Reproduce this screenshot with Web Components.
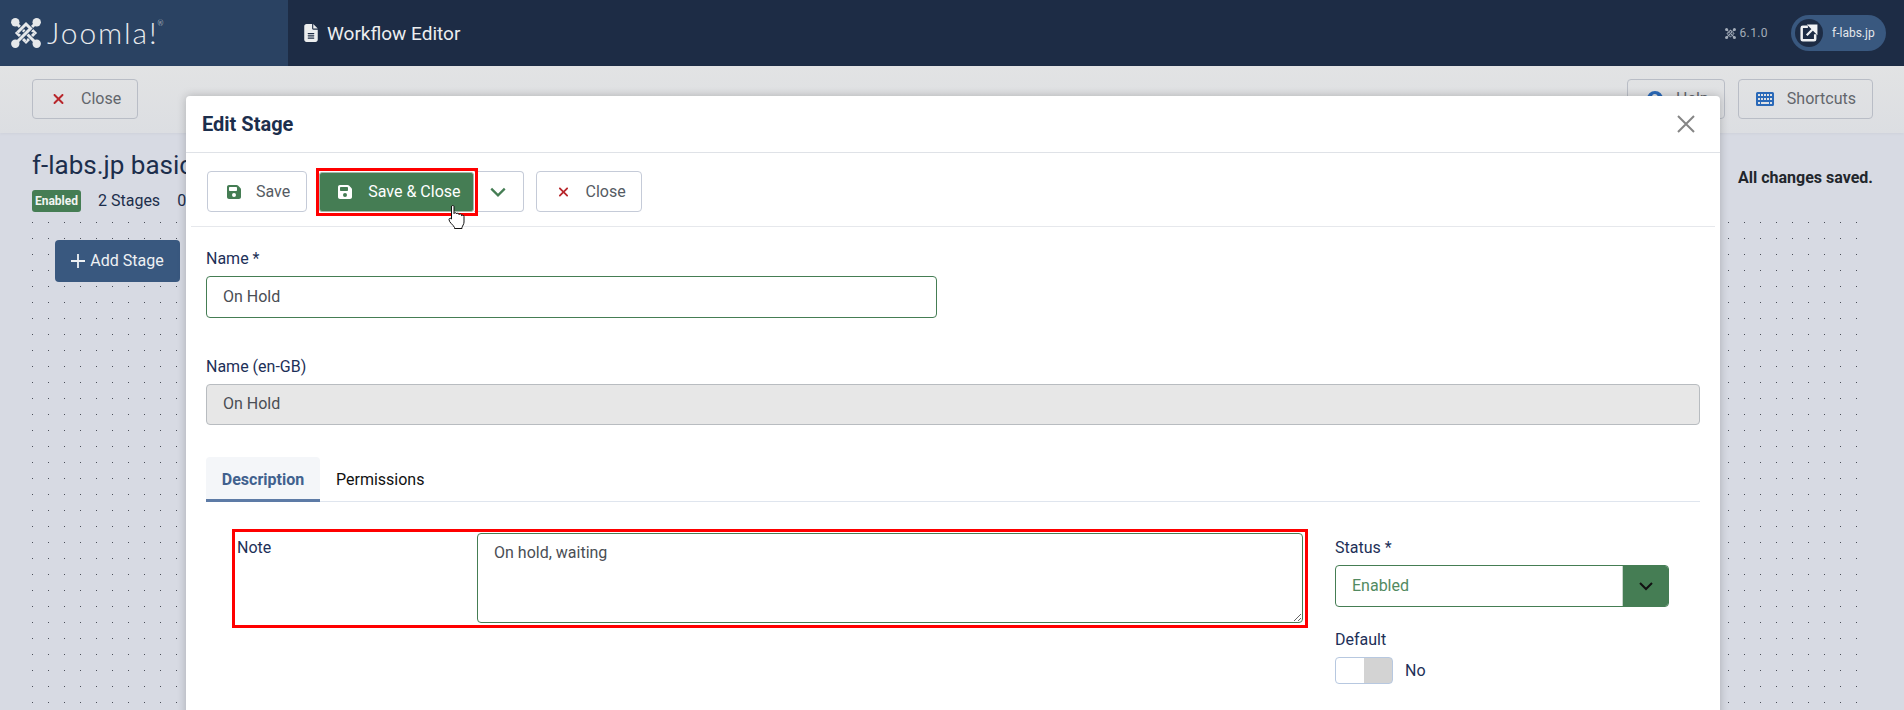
<!DOCTYPE html>
<html lang="en">
<head>
<meta charset="utf-8">
<title>Workflow Editor</title>
<style>
html,body{margin:0;padding:0;overflow:hidden;background:#d7dae3}
body{font-family:Roboto,"Liberation Sans",sans-serif;font-size:16px}
</style>
</head>
<body>
<j-app>
  <j-header slot="header"></j-header>
  <j-toolbar slot="toolbar">
    <j-btn tone="page" pad="19" pr="16" gap="16"><j-icon name="x" color="#b8272c" w="13" h="16" slot="icon"></j-icon>Close</j-btn>
    <j-btn tone="page" slot="end" gap="13" pad="19" pr="15"><j-icon name="help" color="#2a69b8" w="16" h="16" slot="icon"></j-icon>Help</j-btn>
    <j-btn tone="page" slot="end" gap="13" pad="17" pr="16"><j-icon name="keyboard" color="#2a69b8" w="18" h="16" slot="icon"></j-icon>Shortcuts</j-btn>
  </j-toolbar>
  <j-page slot="page"></j-page>
  <j-dialog slot="dialog">
    <span slot="title">Edit Stage</span>
    <j-btn slot="tools" gap="15" pad="19" pr="16"><j-icon name="save" color="#457d54" w="14" h="16" slot="icon"></j-icon>Save</j-btn>
    <j-btn slot="tools" tone="green" mark gap="16" pad="18" pr="12" style="margin-left:12px"><j-icon name="save" color="#fff" w="14" h="16" slot="icon"></j-icon>Save &amp; Close</j-btn>
    <j-btn slot="tools" tone="caret"><j-icon name="chev" color="#457d54" w="18" h="18" slot="icon"></j-icon></j-btn>
    <j-btn slot="tools" style="margin-left:12px" gap="17" pad="21" pr="15"><j-icon name="x" color="#b8272c" w="11" h="16" slot="icon"></j-icon>Close</j-btn>
    <j-stage-form></j-stage-form>
  </j-dialog>
</j-app>

<script>
const ICONS={
 save:['0 0 448 512','<path d="M64 32C28.7 32 0 60.7 0 96V416c0 35.3 28.7 64 64 64H384c35.3 0 64-28.7 64-64V173.3c0-17-6.7-33.3-18.7-45.3L352 50.7C340 38.7 323.7 32 306.7 32H64zm0 96c0-17.7 14.3-32 32-32H288c17.7 0 32 14.3 32 32v64c0 17.7-14.3 32-32 32H96c-17.7 0-32-14.3-32-32V128zM224 288a64 64 0 1 1 0 128 64 64 0 1 1 0-128z"/>'],
 x:['0 0 384 512','<path d="M342.6 150.6c12.5-12.5 12.5-32.8 0-45.3s-32.8-12.5-45.3 0L192 210.7 86.6 105.4c-12.5-12.5-32.8-12.5-45.3 0s-12.5 32.8 0 45.3L146.7 256 41.4 361.4c-12.5 12.5-12.5 32.8 0 45.3s32.8 12.5 45.3 0L192 301.3 297.4 406.6c12.5 12.5 32.8 12.5 45.3 0s12.5-32.8 0-45.3L237.3 256 342.6 150.6z"/>'],
 file:['0 0 384 512','<path d="M64 0C28.7 0 0 28.7 0 64V448c0 35.3 28.7 64 64 64H320c35.3 0 64-28.7 64-64V160H256c-17.7 0-32-14.3-32-32V0H64zM256 0V128H384L256 0zM112 256H272c8.8 0 16 7.2 16 16s-7.2 16-16 16H112c-8.8 0-16-7.2-16-16s7.2-16 16-16zm0 64H272c8.8 0 16 7.2 16 16s-7.2 16-16 16H112c-8.8 0-16-7.2-16-16s7.2-16 16-16zm0 64H272c8.8 0 16 7.2 16 16s-7.2 16-16 16H112c-8.8 0-16-7.2-16-16s7.2-16 16-16z"/>'],
 keyboard:['0 0 18 14','<path fill-rule="evenodd" d="M1.5 0h15A1.5 1.5 0 0 1 18 1.500v11a1.500 1.500 0 0 1-1.500 1.500h-15A1.500 1.500 0 0 1 0 12.500v-11A1.500 1.500 0 0 1 1.500 0zM2 2v2h2V2zm3 0v2h2V2zm3 0v2h2V2zm3 0v2h2V2zm3 0v2h2V2zM2 6v2h2V6zm3 0v2h2V6zm3 0v2h2V6zm3 0v2h2V6zm3 0v2h2V6zM2 10v2h2v-2zm3 0v2h8v-2zm9 0v2h2v-2z"/>'],
 chev:['0 0 16 16','<path d="M2 5l6 6 6-6" fill="none" stroke="currentColor" stroke-width="2"/>'],
 help:['0 0 16 16','<path fill-rule="evenodd" d="M8 0a8 8 0 1 1 0 16A8 8 0 0 1 8 0zm0 3a3 3 0 0 0-3 3h2a1 1 0 1 1 1 1H7v2h2V8.800A3 3 0 0 0 8 3zM7 10.500v2h2v-2z"/>'],
 ext:['0 0 16 16','<path d="M7 2.500H2.500a1 1 0 0 0-1 1v10a1 1 0 0 0 1 1h10a1 1 0 0 0 1-1V9" fill="none" stroke="currentColor" stroke-width="2.200"/><path d="M6 10l7.500-7.500M8.500 1.500h6v6z" fill="currentColor" stroke="currentColor" stroke-width="2"/>']
};
function svgIcon(n,w,h,c){const [vb,body]=ICONS[n];return `<svg xmlns="http://www.w3.org/2000/svg" viewBox="${vb}" width="${w}" height="${h}" fill="${c}" style="color:${c};display:block">${body}</svg>`}
function joomlaMark(size,color,gap){
 const d="M4.500 4.500L19.500 19.500 24 15 15.500 6.500";
 const rib=a=>`<g transform="rotate(${a} 15 15)"><path d="${d}" fill="none" stroke="${gap}" stroke-width="4.400"/><path d="${d}" fill="none" stroke="${color}" stroke-width="3"/><circle cx="4.300" cy="4.300" r="4.200" fill="${color}"/></g>`;
 return `<svg xmlns="http://www.w3.org/2000/svg" viewBox="0 0 30 30" width="${size}" height="${size}" style="display:block">${[0,90,180,270].map(rib).join('')}</svg>`;
}
function define(tag,css,html){
 customElements.define(tag,class extends HTMLElement{
  constructor(){super();const s=this.attachShadow({mode:'open'});s.innerHTML=`<style>${css}</style>${typeof html==='function'?html(this):html}`;}
 });
}
customElements.define('j-icon',class extends HTMLElement{
 connectedCallback(){
  if(this.shadowRoot)return;
  const s=this.attachShadow({mode:'open'});
  s.innerHTML=`<style>:host{display:inline-flex;align-items:center;justify-content:center;flex:none}</style>`+svgIcon(this.getAttribute('name'),this.getAttribute('w')||16,this.getAttribute('h')||16,this.getAttribute('color')||'currentColor');
 }
});
customElements.define('j-btn',class extends HTMLElement{
 connectedCallback(){
  if(this.shadowRoot)return;
  const s=this.attachShadow({mode:'open'});
  const gap=this.getAttribute('gap')||16,pad=this.getAttribute('pad')||19,pr=this.getAttribute('pr')||pad;
  const tone=this.getAttribute('tone')||'plain';
  s.innerHTML=`<style>
  :host{display:inline-flex;flex:none;align-self:flex-start}
  :host([mark]){position:relative;z-index:1;height:42px;padding-right:1px;margin-right:-1px;outline:3px solid #f00}
  .b{box-sizing:border-box;height:41px;display:flex;align-items:center;gap:${gap}px;padding:0 ${pr}px 0 ${pad}px;border:1px solid #c5cbd8;border-radius:4px;background:#fff;color:#555b63;font:400 16px/1 Roboto,"Liberation Sans",sans-serif;white-space:nowrap}
  .page{height:40px;background:transparent;border-color:#b9bdc6;color:#62666c}
  .green{height:40px;margin-top:1px;background:#457d54;border-color:#aab9ae;color:#fff;border-radius:3px}
  .caret{width:50px;justify-content:center;padding:0;border-left:0;border-radius:0 4px 4px 0}
  </style><div class="b ${tone}"><slot name="icon"></slot><slot></slot></div>`;
 }
});
define('j-app',`
 :host{display:flex;flex-direction:column;position:relative;width:1904px;height:710px;overflow:hidden;background:#d7dae3}
`,`<slot name="header"></slot><slot name="toolbar"></slot><slot name="page"></slot><slot name="dialog"></slot>`);
define('j-header',`
 :host{display:flex;flex:none;height:66px;background:#1d2c45;color:#f2f3f4;align-items:center}
 .logo{width:288px;height:66px;background:#2a4262;display:flex;align-items:center;box-sizing:border-box;padding-left:11px;gap:6px;flex:none}
 .word{font:300 30px/1 Lato,"Liberation Sans",sans-serif;color:#e9ebee;letter-spacing:1.9px;position:relative;top:-1px}
 .word sup{font-size:7px;vertical-align:top;position:relative;top:3px;letter-spacing:0;margin-left:-1px}
 .title{display:flex;align-items:center;gap:9px;margin-left:16px;font:400 19px/1 Roboto,sans-serif;color:#eceeef;flex:1}
 .ver{display:flex;align-items:center;gap:3px;font:400 12px/1 Roboto,sans-serif;color:#a3acb9;letter-spacing:.4px;margin-right:23px}
 .site{box-sizing:border-box;width:95px;height:36px;border-radius:18px;background:#39587f;display:flex;align-items:center;padding-left:4px;gap:9px;margin-right:18px;font:400 12px/1 Roboto,sans-serif;color:#e3e7ec}
 .c{width:28px;height:28px;border-radius:50%;background:#1d2c45;display:flex;align-items:center;justify-content:center}
`,()=>`<div class="logo">${joomlaMark(30,'#e6e8ea','#2a4262')}<span class="word">Joomla!<sup>®</sup></span></div>
 <div class="title">${svgIcon('file',14,18,'#eceeef')}<span>Workflow Editor</span></div>
 <div class="ver">${joomlaMark(11,'#a3acb9','#1d2c45')}<span>6.1.0</span></div>
 <div class="site"><span class="c">${svgIcon('ext',18,18,'#f0f2f4')}</span><span>f-labs.jp</span></div>`);
define('j-toolbar',`
 :host{display:flex;flex:none;box-sizing:border-box;height:67px;padding:13px 31px 14px 32px;justify-content:space-between;background:linear-gradient(#e2e3e4,#dcdee2);position:relative;box-shadow:0 1px 3px rgba(0,0,0,.04)}
 .end{display:flex;gap:13px}
`,`<slot></slot><div class="end"><slot name="end"></slot></div>`);
define('j-page',`
 :host{display:flex;flex-direction:column;flex:1;min-height:0;padding:14px 32px 0;box-sizing:border-box;color:#1c2e4c}
 .top{display:flex;justify-content:space-between;align-items:flex-start;flex:none}
 h1{margin:0;font:400 26px/36px Roboto,sans-serif;color:#1c2e4c}
 .meta{display:flex;align-items:center;gap:17px;margin-top:7px;height:22px;font:400 16px/22px Roboto,sans-serif}
 .badge{box-sizing:border-box;width:49px;height:22px;background:#457d54;border-radius:3px;color:#f2f5f2;font:700 12px/22px Roboto,sans-serif;text-align:center}
 .saved{font:700 16px/1 Roboto,sans-serif;color:#22262c;margin:23px -1px 0 0}
 .canvas{flex:1;margin-top:10px;padding:18px 0 0 23px;background-image:radial-gradient(circle at .5px .5px,#4a4e58 .71px,transparent .72px);background-size:16px 16px}
 .add{box-sizing:border-box;width:125px;height:42px;background:#39587f;color:#eef1f4;border-radius:4px;display:flex;align-items:center;justify-content:center;gap:5px;font:400 16px/1 Roboto,sans-serif}
 .add svg{display:block}
`,`<div class="top"><div><h1>f-labs.jp basic</h1><div class="meta"><span class="badge">Enabled</span><span>2 Stages</span><span>0</span></div></div><div class="saved">All changes saved.</div></div>
 <div class="canvas"><div class="add"><svg width="14" height="14" viewBox="0 0 14 14"><path d="M7 0v14M0 7h14" stroke="#eef1f4" stroke-width="1.800"/></svg><span>Add Stage</span></div></div>`);
define('j-dialog',`
 :host{position:absolute;left:186px;top:96px;width:1534px;height:640px;background:#fff;border-radius:4px 4px 0 0;box-shadow:0 0 10px rgba(0,0,0,.22);display:flex;flex-direction:column}
 header{box-sizing:border-box;flex:none;height:57px;border-bottom:1px solid #dfe2e7;display:flex;align-items:center;justify-content:space-between;padding:0 25px 0 16px;font:700 20px/1 Roboto,sans-serif;color:#1c2e4c}
 header svg{display:block}
 .tools{flex:none;display:flex;box-sizing:border-box;height:74px;margin:0 5px;padding:18px 16px 0;border-bottom:1px solid #e6e8ec}
 .body{padding:0 20px;position:relative}
 .cursor{position:absolute;left:262px;top:109px;z-index:2}
`,`<header><slot name="title"></slot><svg width="18" height="18" viewBox="0 0 18 18"><path d="M1 1l16 16M17 1L1 17" stroke="#858585" stroke-width="2"/></svg></header>
 <div class="tools"><slot name="tools"></slot></div>
 <div class="body"><slot></slot></div>
 <svg class="cursor" width="18" height="25" viewBox="0 0 18 25"><path d="M3.500 1.500c0-1.300 2.500-1.300 2.500 0V8.500c0-1 2.500-1 2.500 0v.5c0-1 2.500-1 2.500 0v.7c0-1 2.500-1 2.500 0v1c0-.8 2.500-.8 2.500.6v5.700c0 2.500-1.500 3.500-2 5.500v1H6.500v-1c-1-2.500-5.500-5-5.500-8 0-1.500 2-1.500 2.500-.5v-13z" fill="#fff" stroke="#111" stroke-width="1" stroke-linejoin="round"/></svg>`);
define('j-stage-form',`
 :host{display:block;color:#1c2e5a}
 label,.lab{display:block;font:400 16px/19px Roboto,sans-serif;color:#1d3058}
 .inp{box-sizing:border-box;height:42px;border:1px solid #457d54;border-radius:4px;padding:0 16px;display:flex;align-items:center;font:400 16px/1 Roboto,sans-serif;color:#4a4e54;background:#fff;margin-top:8px}
 .n{width:731px}
 .g{background:#e7e7e7;border-color:#b8bcc0;margin-top:8px;height:41px;padding-bottom:1px}
 .f1{padding-top:22px}.f2{padding-top:39px}
 .tabs{display:flex;margin-top:32px;height:45px;border-bottom:1px solid #dfe5ee;box-sizing:border-box}
 .t{box-sizing:border-box;height:45px;display:flex;align-items:center;padding:0 16px;font:400 16px/1 Roboto,sans-serif;color:#111}
 .t.a{width:114px;padding:3px 0 0;justify-content:center;background:#f4f6f9;border-bottom:3px solid #5d7ba6;color:#41618e;font-weight:700;border-radius:4px 4px 0 0}
 .panel{display:grid;grid-template-columns:1102px 334px;column-gap:27px;}
 .note{box-sizing:border-box;margin:27px 0 0 26px;width:1076px;height:99px;border:3px solid #f00;display:flex;justify-content:space-between;padding:1px 2px 2px}
 .note .lab{padding-top:5px}
 textarea{box-sizing:border-box;width:826px;height:90px;border:1px solid #457d54;border-radius:4px;padding:8px 16px;font:400 16px/1.4 Roboto,sans-serif;color:#4a4e54;margin:0;outline:none;background:#fff;resize:vertical}
 .side{padding-top:36px}
 .sel{box-sizing:border-box;height:42px;margin-top:8px;border:1px solid #457d54;border-radius:4px;display:flex;justify-content:space-between;font:400 16px/40px Roboto,sans-serif;color:#528a61;padding-left:16px;overflow:hidden}
 .caret{width:45px;background:#457d54;display:flex;align-items:center;justify-content:center;border-left:1px solid #c9d6cd}
 .d{margin-top:23px}
 .sw{display:flex;align-items:center;gap:12px;margin-top:8px;font:400 16px/1 Roboto,sans-serif;color:#1d3058}
 .tr{box-sizing:border-box;width:58px;height:27px;border:1px solid #b7c8e0;border-radius:4px;background:linear-gradient(90deg,#fff 50%,#d3d3d3 50%)}
`,`<div class="f1"><label>Name *</label><div class="inp n">On Hold</div></div>
 <div class="f2"><label>Name (en-GB)</label><div class="inp g">On Hold</div></div>
 <div class="tabs"><div class="t a">Description</div><div class="t">Permissions</div></div>
 <div class="panel">
  <div class="note"><span class="lab">Note</span><textarea>On hold, waiting</textarea></div>
  <div class="side"><label>Status *</label><div class="sel"><span>Enabled</span><span class="caret"><svg width="16" height="16" viewBox="0 0 16 16"><path d="M2 5l6 6 6-6" fill="none" stroke="#111" stroke-width="2"/></svg></span></div>
   <label class="d">Default</label><div class="sw"><span class="tr"></span><span>No</span></div></div>
 </div>`);
</script>
</body>
</html>
